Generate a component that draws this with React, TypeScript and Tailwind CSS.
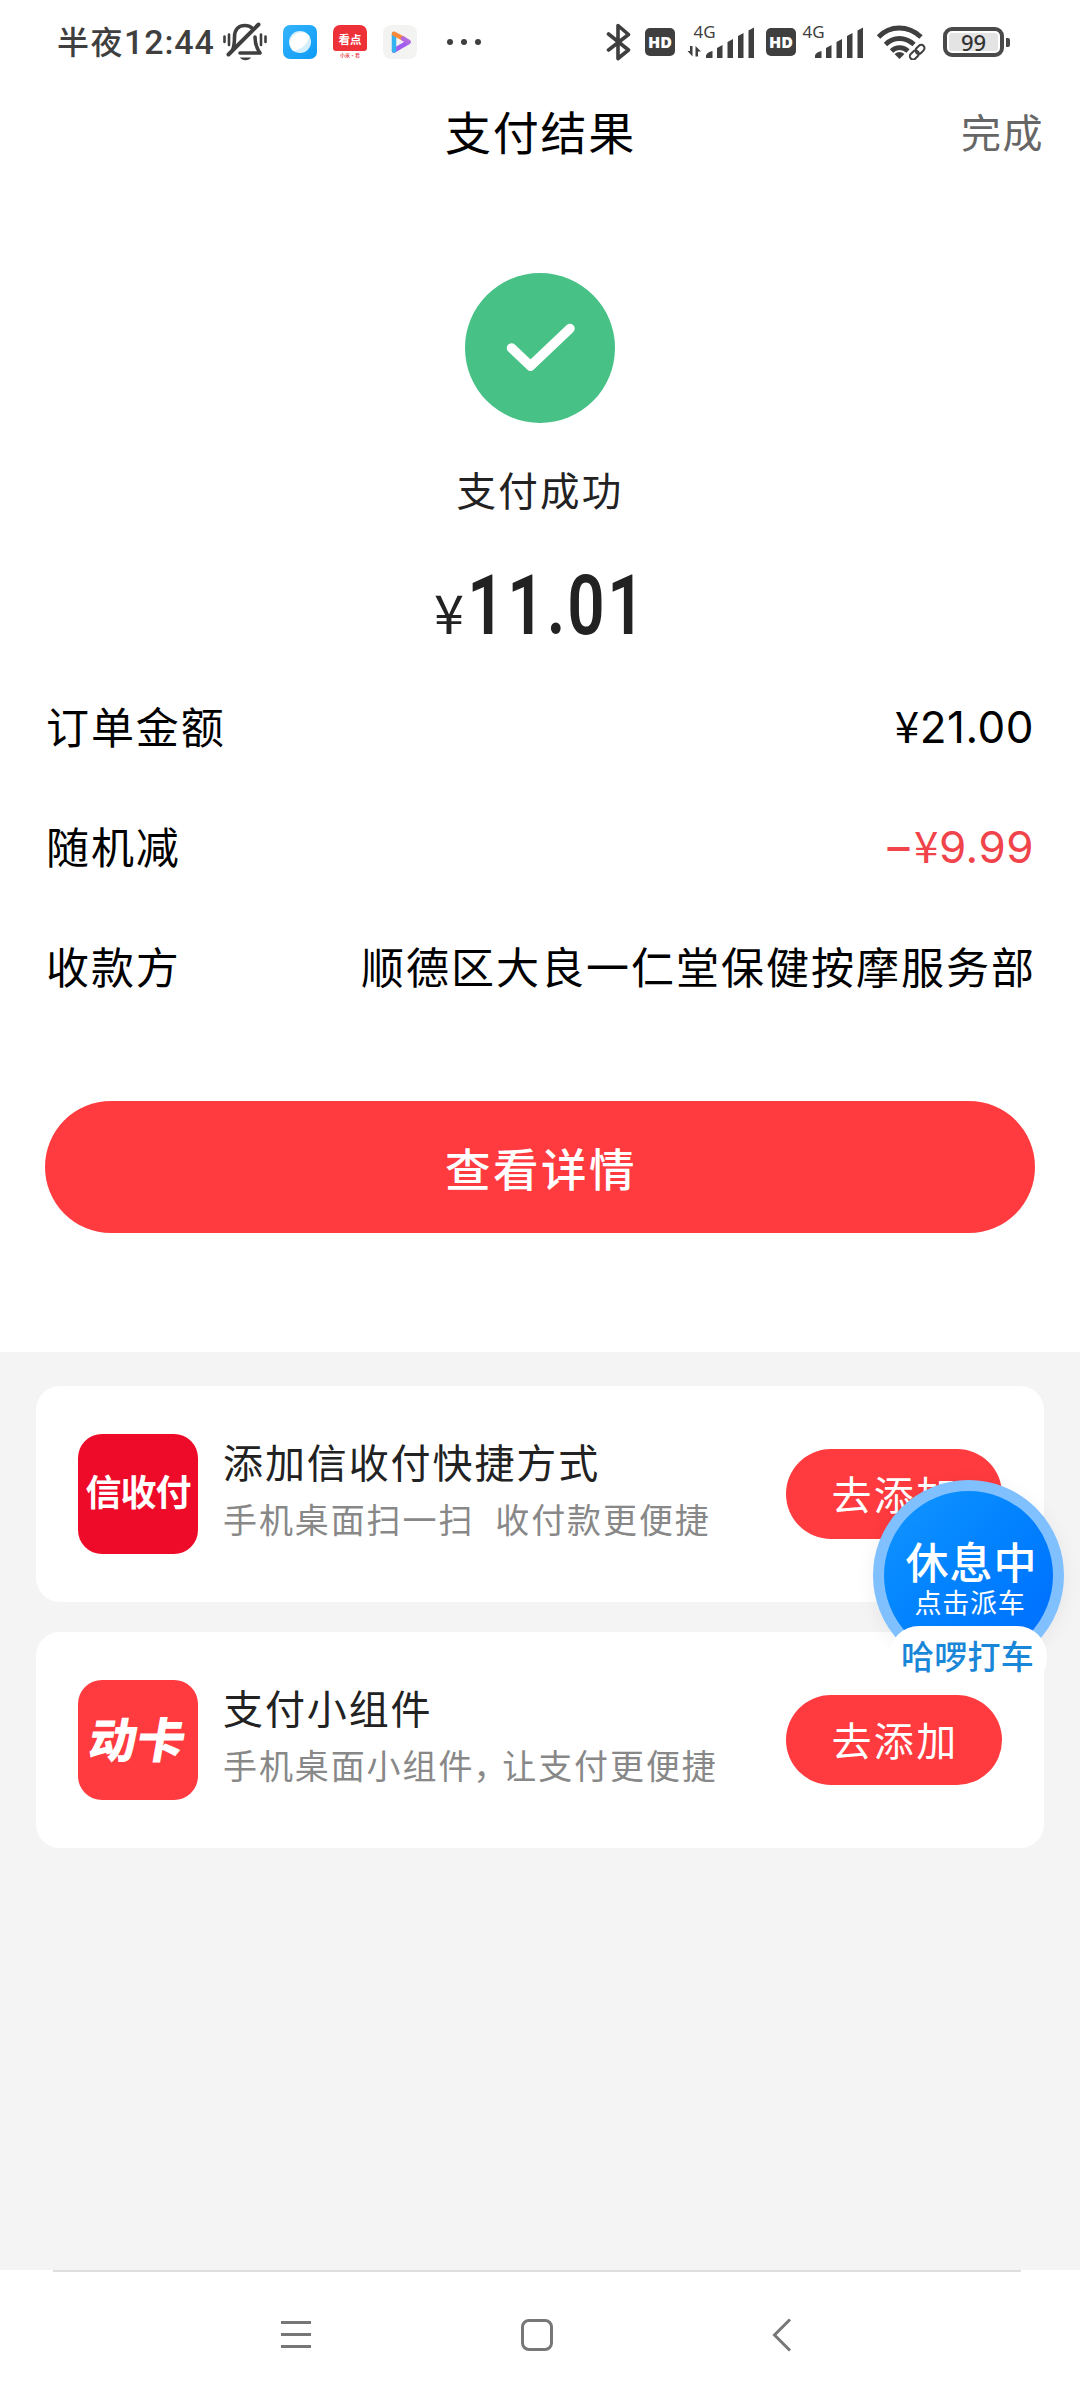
import type { ReactNode } from 'react'
import { clsx } from 'clsx'

const INK = '#3f3f3f'

function MutedBell() {
  return (
    <svg width="46" height="40" viewBox="0 0 46 40" fill="none" stroke={INK} strokeLinecap="round">
      <path d="M10.5 28.5C12 25 12.500 21 12.500 15C12.500 7 17 3.500 23 3.500C26 3.500 28.500 4.500 30 6" strokeWidth="3.600" />
      <path d="M33 15C33 22 34.500 26 38 31H18" strokeWidth="3.600" strokeLinejoin="round" />
      <path d="M36.500 2.500L6.500 32.500" strokeWidth="4" />
      <path d="M2.500 14.500V20M7 12.500V23M39 12.500V23M43.500 14.500V20" strokeWidth="2.600" />
      <path d="M18 35.500H29C27 39 20 39 18 35.500Z" fill={INK} stroke="none" />
    </svg>
  )
}

function BrowserIcon() {
  return (
    <svg width="34" height="34" viewBox="0 0 34 34">
      <defs>
        <linearGradient id="browser" x1="0" y1="0" x2="1" y2="1">
          <stop offset="0" stopColor="#35b4fb" />
          <stop offset="1" stopColor="#0d9bf6" />
        </linearGradient>
      </defs>
      <rect width="34" height="34" rx="7" fill="url(#browser)" />
      <circle cx="17" cy="17" r="11" fill="#d3effd" />
      <path d="M26.500 11A11 11 0 1 0 10 26C18 25 25 19 26.500 11Z" fill="#fff" />
    </svg>
  )
}

function NewsIcon() {
  return (
    <div className="flex h-[34px] w-[34px] flex-col overflow-hidden rounded-[7px] bg-white">
      <div className="flex h-[26px] items-center justify-center rounded-b-[3px] bg-[#ee3038] pt-[3px] text-[11.500px] leading-none font-bold text-white">
        看点
      </div>
      <div className="h-[8px] text-center text-[5px] leading-[7px] font-bold text-[#ee5a5e]">小米·看</div>
    </div>
  )
}

function VideoIcon() {
  return (
    <svg width="34" height="34" viewBox="0 0 34 34" fill="none" strokeWidth="4.500" strokeLinecap="round">
      <rect width="34" height="34" rx="8" fill="#f3f3f2" />
      <path d="M11 25.500L25.500 17" stroke="#a15cf0" />
      <path d="M11 9L11 25.500" stroke="#35b2f0" />
      <path d="M11 8.800L20 13.500" stroke="#fb8a3a" />
      <path d="M20 13.500L25.500 17" stroke="#b16ae0" />
    </svg>
  )
}

function Bluetooth() {
  return (
    <svg width="26" height="38" viewBox="0 0 26 38" fill="none" stroke={INK} strokeWidth="3.600" strokeLinecap="round" strokeLinejoin="round">
      <path d="M2.500 11L22.500 27L12 35.500V2.500L22.500 11.500L2.500 27" />
    </svg>
  )
}

function HdBadge() {
  return (
    <div className="flex h-[28px] w-[30px] items-center justify-center rounded-[5px] bg-[#3f3f3f] font-['Open_Sans','Noto_Sans',sans-serif] text-[16px] leading-none font-extrabold text-white">
      HD
    </div>
  )
}

function Signal({ data }: { data?: boolean }) {
  return (
    <svg className="overflow-visible" width="70" height="36" viewBox="0 0 70 36" fill={INK}>
      <text x="6.500" y="14" fontSize="17" fontFamily="Noto Sans, sans-serif">
        4G
      </text>
      {data && <path d="M5.500 22V32.500L0.500 27H3V22ZM8.500 32.500V22L14 27.500H11V32.500Z" />}
      <path d="M19 34V31.500Q20 28 25.500 27V34ZM30 34V24L35.500 21V34ZM40.500 34V18L46 15V34ZM51 34V12L56.500 9V34ZM61.500 34V6.500L67 3.500V34Z" />
    </svg>
  )
}

function Wifi() {
  return (
    <svg width="50" height="36" viewBox="0 0 50 36" fill="none" stroke={INK} strokeWidth="4.800">
      <path d="M2.500 13C14 1 32 1 45 13" />
      <path d="M9.500 20.500C17.500 12.500 29 12.500 38 20.500" />
      <path d="M15.500 27C20 22.500 27 22.500 32 27" />
      <path d="M18.500 30Q23.500 26 28.500 30L23.500 35Z" fill={INK} stroke="none" />
      <g transform="rotate(-45 41 28)" stroke="#fff" strokeWidth="5">
        <rect x="32" y="25" width="10" height="6.500" rx="3.200" />
        <rect x="40" y="25" width="10" height="6.500" rx="3.200" />
      </g>
      <g transform="rotate(-45 41 28)" strokeWidth="2">
        <rect x="32" y="25" width="10" height="6.500" rx="3.200" />
        <rect x="40" y="25" width="10" height="6.500" rx="3.200" />
      </g>
    </svg>
  )
}

function Battery() {
  return (
    <div className="flex items-center gap-[2px]">
      <div className="h-[30px] w-[61px] rounded-[9px] border-[4px] border-[#4a4a4a] p-[2px]">
        <div className="flex h-full items-center justify-center rounded-[3px] bg-[#e4e4e4] font-['Noto_Sans',sans-serif] text-[22px] leading-none font-medium text-[#333]">
          99
        </div>
      </div>
      <div className="h-[9px] w-[4px] rounded-r-[2px] bg-[#4a4a4a]" />
    </div>
  )
}

function StatusBar() {
  return (
    <div className="flex h-[84px] items-center pl-[57px]">
      <div className="flex w-[165px] items-baseline text-[#3f3f3f]">
        <span className="text-[32px] font-medium tracking-[1.500px]">半夜</span>
        <span className="font-[Roboto,sans-serif] text-[34px] font-medium tracking-[0.900px]">12:44</span>
      </div>
      <MutedBell />
      <div className="ml-[15px] flex gap-[16px]">
        <BrowserIcon />
        <NewsIcon />
        <VideoIcon />
      </div>
      <div className="ml-[30px] flex gap-[8px]">
        <i className="h-[6px] w-[6px] rounded-full bg-[#3f3f3f]" />
        <i className="h-[6px] w-[6px] rounded-full bg-[#3f3f3f]" />
        <i className="h-[6px] w-[6px] rounded-full bg-[#3f3f3f]" />
      </div>
      <div className="ml-auto flex items-center pr-[70px]">
        <Bluetooth />
        <div className="ml-[13px] flex items-center">
          <HdBadge />
          <div className="ml-[12px]">
            <Signal data />
          </div>
        </div>
        <div className="ml-[9px] flex items-center">
          <HdBadge />
          <Signal />
        </div>
        <div className="ml-[10px]">
          <Wifi />
        </div>
        <div className="ml-[17px]">
          <Battery />
        </div>
      </div>
    </div>
  )
}

function Header() {
  return (
    <header className="grid h-[98px] grid-cols-3 items-center pr-[36px]">
      <span />
      <h1 className="pb-[6px] pl-[37px] text-center text-[46px] tracking-[1.800px] whitespace-nowrap text-black">支付结果</h1>
      <button className="justify-self-end pb-[4px] text-[40px] tracking-[1.500px] text-[#666]">完成</button>
    </header>
  )
}

// Tabular digits: every figure takes 40px, the point 20px
function Total({ value }: { value: string }) {
  return (
    <div className="flex font-[Roboto,sans-serif] text-[84px] leading-[90px] font-semibold">
      {value.split('').map((char, i) => (
        <span key={i} className={clsx('flex justify-center', char === '.' ? 'w-[20px]' : 'w-[40px]')}>
          <span className="scale-x-[0.78]">{char}</span>
        </span>
      ))}
    </div>
  )
}

function Yen() {
  return <span className="font-['Noto_Sans_CJK_SC',sans-serif]">¥</span>
}

function Row({ label, children, className }: { label: string; children: ReactNode; className?: string }) {
  return (
    <div className="flex h-[120px] items-center justify-between">
      <span className="tracking-[1.900px]">{label}</span>
      <span className={clsx('whitespace-nowrap', className)}>{children}</span>
    </div>
  )
}

function Shortcut({ icon, title, children }: { icon: ReactNode; title: string; children: ReactNode }) {
  return (
    <div className="flex h-[216px] items-center rounded-[24px] bg-white pr-[42px] pl-[42px]">
      {icon}
      <div className="ml-[25px] flex flex-1 flex-col pb-[8px] whitespace-nowrap">
        <span className="text-[40px] leading-[58px] tracking-[1.900px] text-[#222]">{title}</span>
        <span className="text-[34px] leading-[58px] tracking-[1.900px] text-[#888]">{children}</span>
      </div>
      <button className="h-[90px] w-[216px] rounded-full bg-[#ff3b3f] pb-[3px] pl-[2px] text-[40px] tracking-[2.300px] text-white">
        去添加
      </button>
    </div>
  )
}

function RideBadge() {
  return (
    <div className="absolute top-[1480px] left-[873px] flex h-[211px] w-[191px] flex-col items-center">
      <div className="flex h-[191px] w-[191px] shrink-0 flex-col items-center rounded-full border-[11.500px] border-[#80c0ff] bg-linear-to-br from-[#1598ff] to-[#0068ff] bg-origin-border pt-[44px] text-white shadow-[0_4px_20px_rgba(0,0,0,0.06)]">
        <span className="ml-[6px] text-[43px] leading-[50px] font-medium tracking-[1px] whitespace-nowrap">休息中</span>
        <span className="ml-[3px] text-[27px] leading-[34px] tracking-[0.800px] whitespace-nowrap">点击派车</span>
      </div>
      <div className="mt-[-45px] mr-[2px] flex h-[62px] w-[158px] shrink-0 items-center justify-center rounded-[30px] bg-white pb-[3px] text-[33px] font-medium tracking-[0.300px] text-[#1a86d8]">
        哈啰打车
      </div>
    </div>
  )
}

function NavBar() {
  return (
    <nav className="h-[130px] bg-white pr-[59px] pl-[53px]">
      <div className="h-[2px] bg-[#dedede]" />
      <div className="flex items-center pt-[45px] pl-[227px]">
        <svg width="32" height="36" viewBox="0 0 32 36" stroke="#777" strokeWidth="3">
          <path d="M1 5.500H31M1 17.500H31M1 29.500H31" />
        </svg>
        <svg className="ml-[208px]" width="34" height="36" viewBox="0 0 34 36" fill="none" stroke="#777" strokeWidth="3">
          <rect x="2.500" y="3.500" width="29" height="29" rx="6.500" />
        </svg>
        <svg className="ml-[217px]" width="22" height="36" viewBox="0 0 22 36" fill="none" stroke="#777" strokeWidth="3">
          <path d="M19 2.500L3.500 18L19 33.500" />
        </svg>
      </div>
    </nav>
  )
}

export default function App() {
  return (
    <div className="relative flex h-[2400px] w-[1080px] flex-col overflow-hidden bg-white font-['Noto_Sans_CJK_SC',sans-serif]">
      <StatusBar />
      <Header />

      <main className="flex h-[1170px] flex-col px-[45px]">
        <div className="flex flex-col items-center pt-[91px]">
          <svg width="150" height="150" viewBox="0 0 150 150" fill="none">
            <circle cx="75" cy="75" r="75" fill="#48c186" />
            <path d="M46.500 75L65.500 93L105 55.500" stroke="#fff" strokeWidth="9.500" strokeLinecap="round" strokeLinejoin="round" />
          </svg>
          <p className="mt-[37px] text-[39.500px] leading-[58px] tracking-[2.300px] text-[#222]">支付成功</p>
          <div className="mt-[43px] flex h-[90px] w-[212px] items-baseline text-[#222]">
            <span className="w-[33px] text-[54px] leading-[90px]">¥</span>
            <Total value="11.01" />
          </div>
        </div>

        <div className="mt-[14px] pr-[1px] pl-[1px] text-[43px] text-black">
          <Row label="订单金额" className="font-[Inter,sans-serif] text-[44px] tracking-[0.500px]">
            <Yen />
            21.00
          </Row>
          <Row label="随机减" className="font-[Inter,sans-serif] text-[44px] tracking-[0.500px] text-[#f0434a]">
            <span className="mr-[4px] font-medium">–</span>
            <Yen />
            9.99
          </Row>
          <Row label="收款方" className="mr-[-2px] tracking-[2px]">
            顺德区大良一仁堂保健按摩服务部
          </Row>
        </div>

        <button className="mt-[76px] h-[132px] w-[990px] shrink-0 rounded-full bg-[#ff3b3f] pl-[2px] text-[45.500px] font-medium tracking-[2.500px] text-white">
          查看详情
        </button>
      </main>

      <section className="flex flex-1 flex-col gap-[30px] bg-[#f4f4f4] px-[36px] pt-[34px]">
        <Shortcut
          title="添加信收付快捷方式"
          icon={
            <div className="flex h-[120px] w-[120px] items-center justify-center rounded-[24px] bg-[#ee0a29] pb-[8px] text-[36px] font-bold tracking-[-1px] text-white">
              信收付
            </div>
          }
        >
          手机桌面扫一扫<span className="ml-[21px]">收付款更便捷</span>
        </Shortcut>
        <Shortcut
          title="支付小组件"
          icon={
            <div className="flex h-[120px] w-[120px] items-center justify-center rounded-[24px] bg-[#ff3b3f] pb-[6px] text-white">
              <span className="-skew-x-10 text-[48px] font-black">动卡</span>
            </div>
          }
        >
          手机桌面小组件<span className="ml-[-1px] tracking-[-5px]">，</span>让支付更便捷
        </Shortcut>
      </section>

      <NavBar />
      <RideBadge />
    </div>
  )
}
